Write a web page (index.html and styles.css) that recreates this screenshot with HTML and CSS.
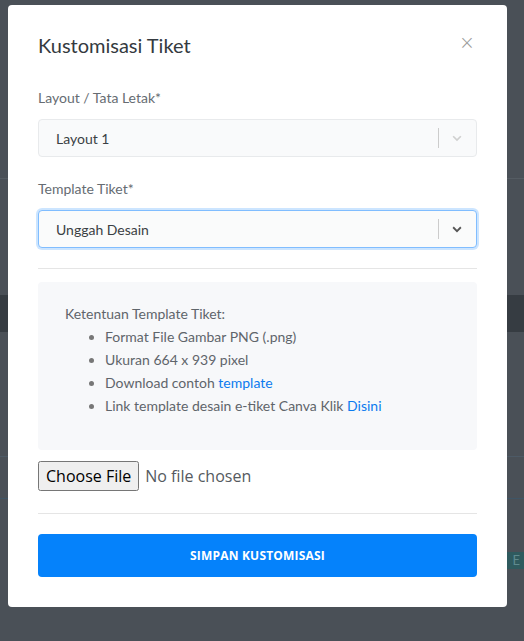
FILE: index.html
```html
<!DOCTYPE html>
<html lang="en">
<head>
    <meta charset="UTF-8">
    <meta name="viewport" content="width=device-width, initial-scale=1.0">
    <title>Kustomisasi Tiket</title>
    <link rel="stylesheet" href="styles.css">
</head>
<body>
    <div class="page">
        <div class="page-row page-top"></div>
        <div class="page-row page-mid"></div>
        <div class="page-band"></div>
        <div class="page-row page-list"></div>
        <div class="page-row page-line"></div>
        <div class="page-row page-badge-row"><span class="page-badge">S E</span></div>
    </div>

    <div class="modal">
        <div class="modal-dialog">
            <div class="modal-header">
                <h4 class="modal-title">Kustomisasi Tiket</h4>
                <button type="button" class="close">&times;</button>
            </div>
            <form class="modal-body">
                <div class="form-group">
                    <label>Layout / Tata Letak*</label>
                    <div class="select select-disabled">
                        <span class="select-value">Layout 1</span>
                        <span class="select-sep"></span>
                        <svg class="select-arrow" width="14" height="14" viewBox="0 0 20 20"><path d="M4.5 7.5 L10 13 L15.5 7.5" fill="none" stroke="currentColor" stroke-width="2.4"/></svg>
                    </div>
                </div>
                <div class="form-group form-group-last">
                    <label>Template Tiket*</label>
                    <div class="select select-focus">
                        <span class="select-value">Unggah Desain</span>
                        <span class="select-sep"></span>
                        <svg class="select-arrow" width="14" height="14" viewBox="0 0 20 20"><path d="M4.5 7.5 L10 13 L15.5 7.5" fill="none" stroke="currentColor" stroke-width="2.6"/></svg>
                    </div>
                </div>
                <hr>
                <div class="info-box">
                    <p>Ketentuan Template Tiket:</p>
                    <ul>
                        <li>Format File Gambar PNG (.png)</li>
                        <li>Ukuran 664 x 939 pixel</li>
                        <li>Download contoh <a href="#">template</a></li>
                        <li>Link template desain e-tiket Canva Klik <a href="#">Disini</a></li>
                    </ul>
                </div>
                <input type="file" class="file-input">
                <hr>
                <button type="submit" class="btn-primary">SIMPAN KUSTOMISASI</button>
            </form>
        </div>
    </div>
</body>
</html>
```

FILE: styles.css
```css
body {
    margin: 0;
    font-family: "Lato", "Noto Sans", sans-serif;
    background-color: #4a5057;
    height: 641px;
    overflow: hidden;
}
.page-row {
    border-bottom: 1px solid #555c63;
}
.page-top {
    height: 178px;
}
.page-mid {
    height: 116px;
    border-bottom: none;
}
.page-band {
    height: 37px;
    background-color: #363c42;
}
.page-list {
    height: 124px;
    border-bottom-color: #4d5a66;
}
.page-line {
    height: 41px;
    border-bottom-color: #3f5566;
}
.page-badge-row {
    border-bottom: none;
    padding-top: 50px;
    text-align: right;
}
.page-badge {
    display: inline-block;
    background-color: #2f5a5e;
    color: #5f8a8e;
    font-size: 13px;
    padding: 0 2px 0 4px;
    letter-spacing: 2px;
    line-height: 17px;
}

.modal {
    position: fixed;
    top: 0;
    left: 0;
    right: 0;
    bottom: 0;
}
.modal-dialog {
    margin: 5px 0 0 8px;
    width: 499px;
    background-color: #fff;
    border-radius: 4px;
    box-sizing: border-box;
    padding: 0 30px 30px;
}
.modal-header {
    display: flex;
    justify-content: space-between;
    align-items: center;
    height: 79px;
}
.modal-title {
    margin: 0;
    font-size: 20px;
    font-weight: 400;
    color: #343a40;
}
.close {
    border: none;
    background: none;
    padding: 0 2px 4px 0;
    font-size: 19px;
    line-height: 1;
    color: #9a9a9a;
    font-family: "DejaVu Sans", sans-serif;
    font-weight: 300;
}
.form-group {
    margin-bottom: 22px;
}
.form-group-last {
    margin-bottom: 20px;
}
.form-group label {
    display: block;
    font-size: 14px;
    color: #666c72;
    line-height: 20px;
    margin: 4px 0 11px;
}
.select {
    display: flex;
    align-items: center;
    height: 38px;
    box-sizing: border-box;
    border: 1px solid #e8eaec;
    border-radius: 4px;
    background-color: #f9fafb;
    padding-left: 17px;
}
.select-value {
    flex: 1;
    font-size: 14px;
    color: #3a3f44;
}
.select-sep {
    width: 1px;
    height: 20px;
    background-color: #cccccc;
}
.select-arrow {
    margin: 0 12px 0 11px;
}
.select-disabled .select-arrow {
    color: #d0d0d0;
}
.select-focus {
    border-color: #80bdff;
    box-shadow: 0 0 0 2px rgba(0, 123, 255, 0.2);
    background-color: #fafbfb;
}
.select-focus .select-arrow {
    color: #555;
}
hr {
    border: none;
    border-top: 1px solid #e5e5e5;
    margin: 0;
}
.info-box {
    margin-top: 13px;
    background-color: #f7f8fa;
    border-radius: 4px;
    padding: 20px 27px 33px;
    font-size: 14px;
    color: #5f656b;
    line-height: 23px;
}
.info-box p {
    margin: 0;
}
.info-box ul {
    margin: 0;
    padding-left: 40px;
}
.info-box li::marker {
    color: #777;
}
.info-box a {
    color: #0b7bef;
    text-decoration: none;
}
.file-input {
    display: block;
    margin: 11px 0 22px;
    font-family: "Open Sans", sans-serif;
    font-size: 16px;
    color: #555a60;
}
.file-input::file-selector-button {
    font-family: "Open Sans", sans-serif;
    font-size: 16px;
    padding: 2px 6px;
    margin-right: 6px;
}
.btn-primary {
    display: block;
    width: 100%;
    margin-top: 20px;
    height: 43px;
    border: none;
    border-radius: 4px;
    background-color: #0582fb;
    color: #fff;
    font-family: "Open Sans", sans-serif;
    font-size: 12px;
    font-weight: 700;
    letter-spacing: 0.2px;
}
```
